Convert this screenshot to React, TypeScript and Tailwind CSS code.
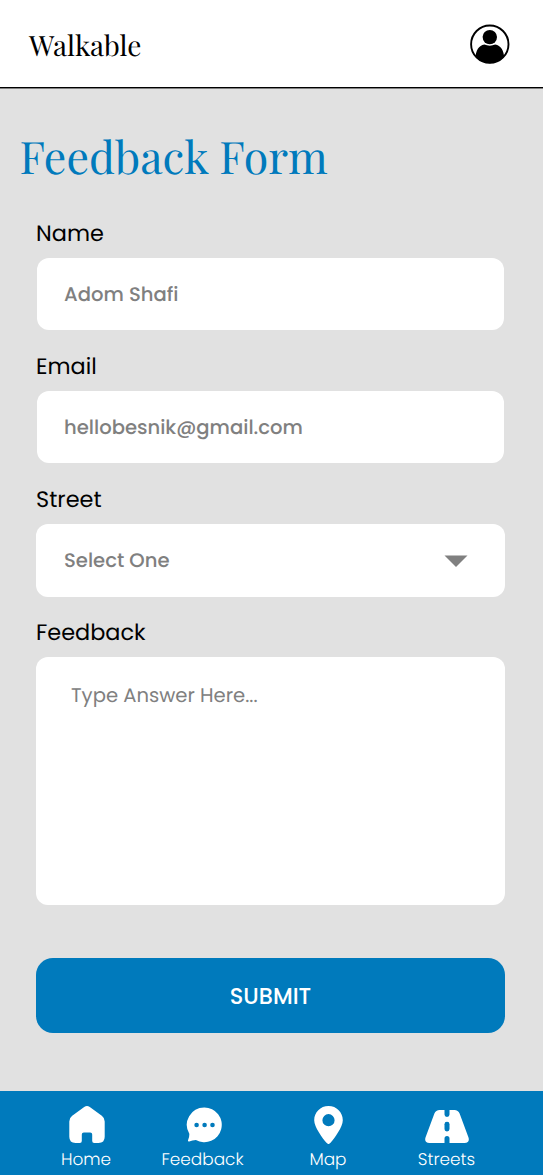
import type { ReactNode } from "react";

const sans = "font-['Poppins','Inter',sans-serif]";
const serif = "font-['Playfair_Display','Liberation_Serif',serif]";

function UserIcon() {
  return (
    <svg className="h-10 w-10" viewBox="0 0 40 40" aria-hidden="true">
      <clipPath id="avatar-clip">
        <circle cx="19.8" cy="20.2" r="19" />
      </clipPath>
      <circle cx="19.8" cy="20.2" r="18.7" fill="#fff" stroke="#000" strokeWidth="1.9" />
      <circle cx="19.8" cy="13.1" r="7.2" />
      <path
        clipPath="url(#avatar-clip)"
        d="M5.6 34C5.6 26.5 8.8 21.6 14.4 20.5C17.5 22 22.1 22 25.2 20.5C30.8 21.6 34 26.5 34.2 34V40H5.6Z"
      />
    </svg>
  );
}

function HomeIcon() {
  return (
    <svg className="ml-[2px] h-[38px] w-9" viewBox="0 0 36 38" fill="#fff" aria-hidden="true">
      <path d="M15.2 1.1Q18 -.9 20.8 1.1L32.8 9.8Q35.7 11.9 35.7 15.5V30.7Q35.7 36.9 29.5 36.9H25.2Q23.2 36.9 23.2 34.9V28.4Q23.2 26.4 21.2 26.4H14.8Q12.8 26.4 12.8 28.4V34.9Q12.8 36.9 10.8 36.9H6.5Q.3 36.9 .3 30.7V15.5Q.3 11.9 3.2 9.8Z" />
    </svg>
  );
}

function ChatIcon() {
  return (
    <svg className="ml-[2px] h-[38px] w-9" viewBox="0 0 36 38" aria-hidden="true">
      <path
        fill="#fff"
        d="M18.4 1.4A17.4 17.4 0 1 1 9.9 34Q6.4 34.5 3.2 35.4Q1.5 35.7 2.1 34Q3.5 31.2 3.3 27.7A17.4 17.4 0 0 1 18.4 1.4Z"
      />
      <g fill="#007abc">
        <circle cx="10.6" cy="19" r="2.3" />
        <circle cx="18.6" cy="19" r="2.3" />
        <circle cx="26.5" cy="19" r="2.3" />
      </g>
    </svg>
  );
}

function PinIcon() {
  return (
    <svg className="h-[38px] w-[29px]" viewBox="0 0 29 38" fill="#fff" aria-hidden="true">
      <path
        fillRule="evenodd"
        d="M14.5 0C22.6 0 28.8 6.3 28.8 14.2C28.8 21 20.5 32 16.3 37.1Q14.5 39 12.7 37.1C8.5 32 .2 21 .2 14.2C.2 6.3 6.4 0 14.5 0ZM14.5 8.1A6.1 6.1 0 1 0 14.5 20.3A6.1 6.1 0 1 0 14.5 8.1Z"
      />
    </svg>
  );
}

function RoadIcon() {
  return (
    <svg className="h-[38px] w-11" viewBox="0 0 44 38" fill="#fff" aria-hidden="true">
      <path d="M14.7 4H19.5V8.6Q19.5 11 22 11Q24.5 11 24.5 8.6V4H29.3Q33.2 4 34.6 7.6L43.5 31.5Q45 37 39.5 37H24.5V32.5Q24.5 30 22 30Q19.5 30 19.5 32.5V37H4.5Q-1 37 .5 31.5L9.4 7.6Q10.8 4 14.7 4Z" />
      <rect x="19.5" y="15.8" width="5" height="9.6" rx="2.4" fill="#007abc" />
    </svg>
  );
}

function Label({ children, className = "" }: { children: ReactNode; className?: string }) {
  return <div className={`h-[43px] text-[22.4px] leading-9 whitespace-nowrap text-black ${className}`}>{children}</div>;
}

function NavItem({ icon, label, className }: { icon: ReactNode; label: string; className: string }) {
  return (
    <a className={`flex flex-col items-center text-[16.9px] leading-[30px] font-light whitespace-nowrap text-white ${className}`}>
      {icon}
      <span>{label}</span>
    </a>
  );
}

export default function App() {
  return (
    <div className={`flex h-[1175px] w-[543px] flex-col overflow-hidden bg-[#e1e1e1] [text-rendering:geometricPrecision] ${sans}`}>
      <header className="flex h-[88px] shrink-0 items-center justify-between border-b border-black bg-white pr-[33.5px] pl-[29px] shadow-[0_1px_0_#808080]">
        <span className={`pt-1 text-[28px] leading-9 text-black ${serif}`}>Walkable</span>
        <UserIcon />
      </header>

      <main className="flex flex-1 flex-col">
        <h1 className={`mt-[35.4px] h-[92px] pl-[19.5px] text-[44.7px] leading-[68px] whitespace-nowrap text-[#007abc] ${serif}`}>
          Feedback Form
        </h1>

        <form className="flex flex-col pr-[38px] pl-9">
          <Label>Name</Label>
          <div className="mx-[0.6px] flex h-[72px] items-center rounded-xl bg-white pl-[27.4px] text-[19.6px] font-medium text-[#808080]">
            Adom Shafi
          </div>

          <Label className="mt-[18px]">Email</Label>
          <div className="mx-[0.6px] flex h-[72px] items-center rounded-xl bg-white pl-[27.4px] text-[19.6px] font-medium text-[#808080]">
            hellobesnik@gmail.com
          </div>

          <Label className="mt-[18px]">Street</Label>
          <div className="flex h-[73px] items-center justify-between rounded-xl bg-white pr-[37px] pl-7 text-[19.6px] font-medium text-[#808080]">
            <span>Select One</span>
            <svg className="h-3 w-6" viewBox="0 0 24 12" fill="#808080" aria-hidden="true">
              <path d="M.5 .5H23.5L12 12Z" />
            </svg>
          </div>

          <Label className="mt-[17px]">Feedback</Label>
          <div className="h-[248px] rounded-xl bg-white pt-[22px] pl-[35px] text-[19.6px] leading-8 text-[#808080]">
            Type Answer Here...
          </div>

          <button
            type="button"
            className="mt-[53px] h-[75px] rounded-[17px] bg-[#007abc] pt-px text-center text-[22.4px] leading-8 font-medium text-white"
          >
            SUBMIT
          </button>
        </form>
      </main>

      <nav className="flex h-[84.4px] shrink-0 bg-[#007abc] pt-[15px] pl-[37px]">
        <NavItem className="w-[98px]" icon={<HomeIcon />} label="Home" />
        <NavItem className="w-[135px]" icon={<ChatIcon />} label="Feedback" />
        <NavItem className="w-[116px]" icon={<PinIcon />} label="Map" />
        <NavItem className="w-[121px]" icon={<RoadIcon />} label="Streets" />
      </nav>
    </div>
  );
}
